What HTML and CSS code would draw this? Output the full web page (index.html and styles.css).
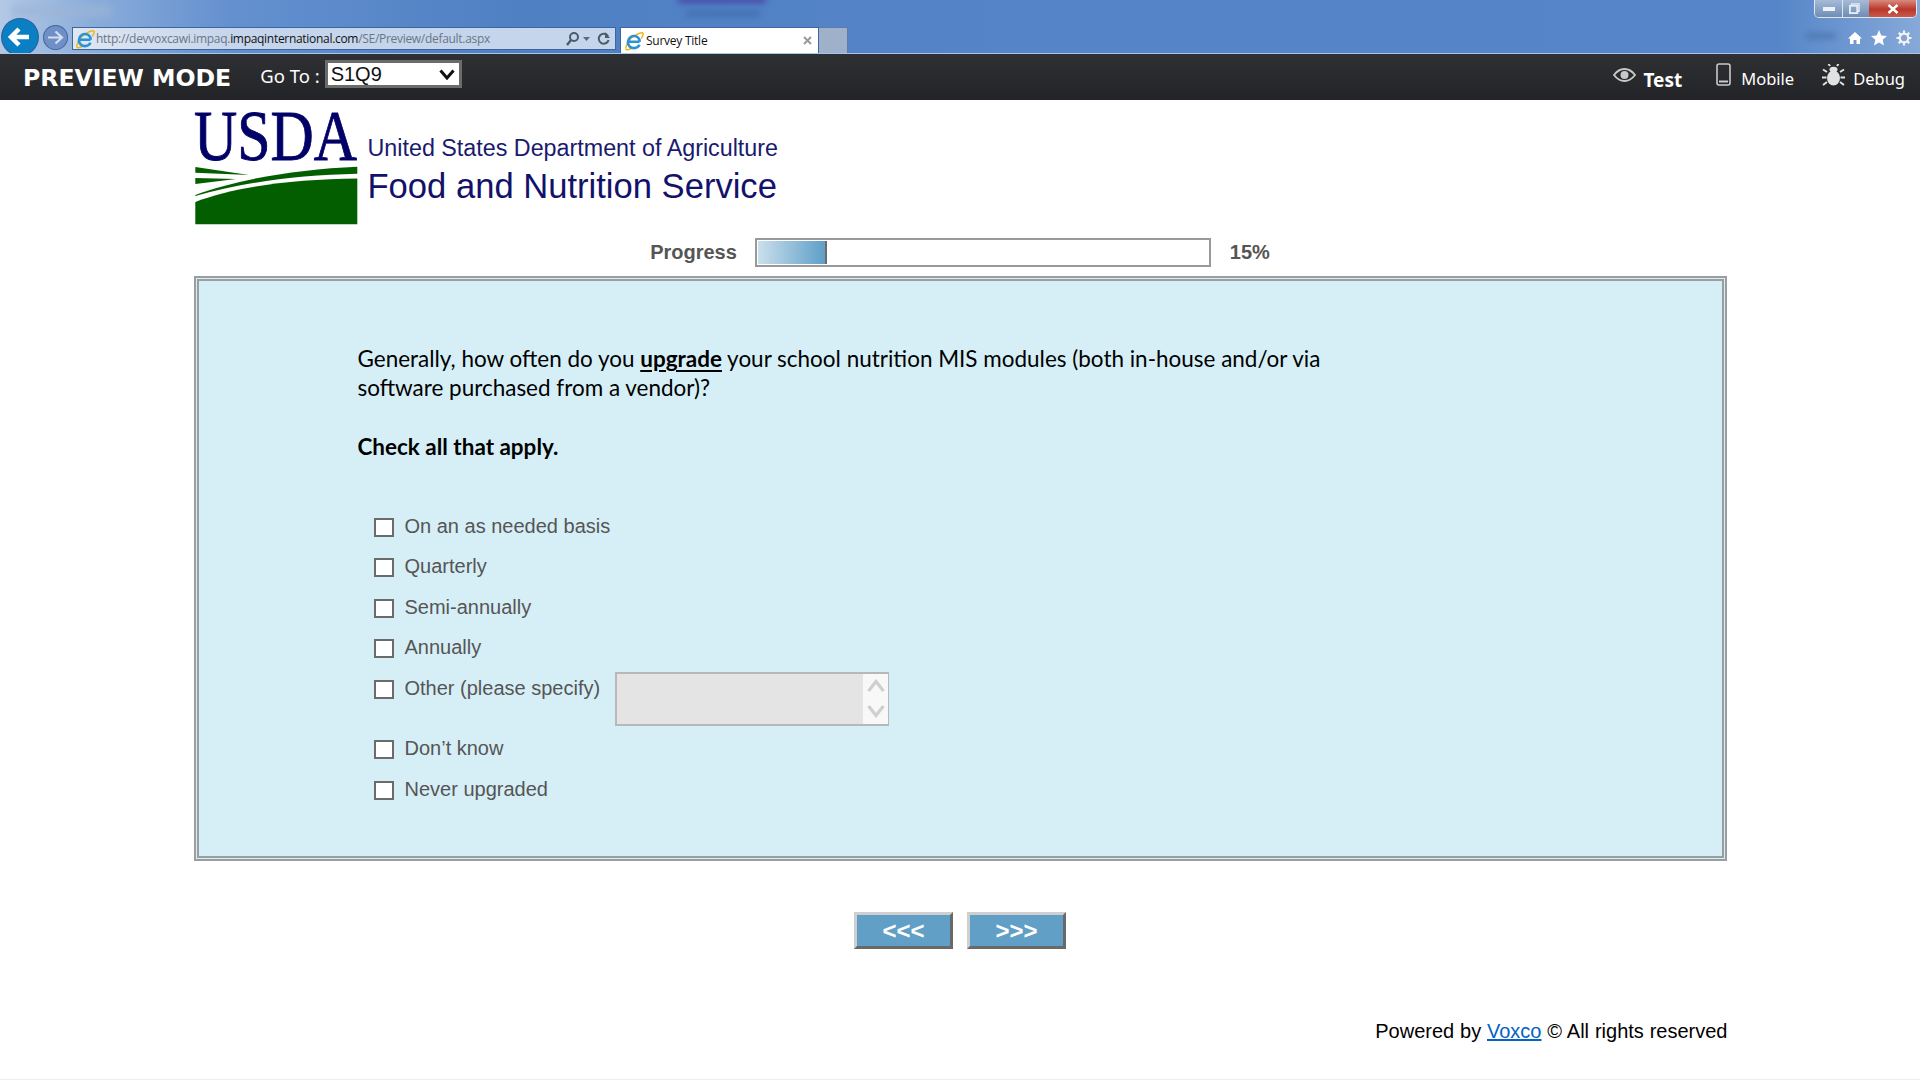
FILE: index.html
```html
<!DOCTYPE html>
<html lang="en">
<head>
<meta charset="utf-8">
<title>Survey Title</title>
<link rel="stylesheet" href="styles.css">
</head>
<body>
<svg class="defs" width="0" height="0" aria-hidden="true">
  <defs>
    <symbol id="ie" viewBox="0 0 20 20">
      <path d="M2.2 17.5C.8 15.6 5 8.2 9.8 5.2 13.6 2.8 18.2 .9 19 2.2c.7 1.1-.6 3.600-1.800 5.400" fill="none" stroke="#f2b51d" stroke-width="1.500"/>
      <path d="M1.500 18c1.500 1.300 4.200.4 6.500-1" fill="none" stroke="#f2b51d" stroke-width="1.500"/>
      <path d="M3.800 10.800h11.700M15.800 10.800C15.800 7.300 13.200 5 10 5 6.600 5 3.900 7.800 3.900 11.200c0 3.500 2.700 5.900 6.100 5.900 2.500 0 4.500-1.200 5.500-3.300" fill="none" stroke="#2a93d5" stroke-width="2.600"/>
    </symbol>
  </defs>
</svg>

<div class="chrome">
  <span class="blur blur-tools"></span>
  <span class="blur blur-purple"></span>
  <span class="blur blur-title"></span>
  <span class="blur blur-right"></span>

  <div class="nav-back">
    <svg viewBox="0 0 36 36" width="36" height="36"><path d="M27 18H10M17 10l-8 8 8 8" fill="none" stroke="#fff" stroke-width="4.500"/></svg>
  </div>
  <div class="nav-forward">
    <svg viewBox="0 0 25 25" width="25" height="25"><path d="M5 12.500h13M12.500 6.500l6.500 6-6.500 6" fill="none" stroke="#d3deef" stroke-width="2.200"/></svg>
  </div>

  <div class="address">
    <svg class="ie-icon" width="20" height="20"><use href="#ie"/></svg>
    <span class="url">http://devvoxcawi.impaq.<b class="url-host">impaqinternational.com</b>/SE/Preview/default.aspx</span>
    <svg class="addr-tools" viewBox="0 0 46 16" width="46" height="16">
      <circle cx="9" cy="6" r="4" fill="none" stroke="#4f5a6b" stroke-width="2"/>
      <path d="M6 9l-4 5" stroke="#4f5a6b" stroke-width="2.400"/>
      <path d="M18 6h7l-3.500 4z" fill="#5d6b80"/>
      <path d="M43 5a5 5 0 1 0 .6 4" fill="none" stroke="#4f5a6b" stroke-width="2"/>
      <path d="M40 1v6h5z" fill="#4f5a6b"/>
    </svg>
  </div>

  <div class="tab">
    <svg class="ie-icon" width="20" height="20"><use href="#ie"/></svg>
    <span class="tab-title">Survey Title</span>
    <svg class="tab-close" viewBox="0 0 9 9" width="9" height="9"><path d="M1 1l7 7M8 1l-7 7" stroke="#9a9a9a" stroke-width="2"/></svg>
  </div>
  <div class="tab-new"></div>

  <div class="browser-tools">
    <svg viewBox="0 0 14 14" width="14" height="14"><path d="M7 1L0 7.500h2V13h3.500V9h3v4H12V7.500h2z" fill="#fff"/></svg>
    <svg viewBox="0 0 16 16" width="16" height="16"><path d="M8 0l2.300 5.400 5.700.5-4.300 3.800 1.300 5.700L8 12.400l-5 3 1.300-5.700L0 5.900l5.700-.5z" fill="#fff"/></svg>
    <svg viewBox="0 0 16 16" width="16" height="16"><circle cx="8" cy="8" r="4.300" fill="none" stroke="#f4f4f4" stroke-width="2.200"/><path d="M8 .5v3M8 12.500v3M.5 8h3M12.500 8h3M2.700 2.700l2.100 2.100M11.200 11.200l2.100 2.100M13.300 2.700l-2.100 2.100M4.800 11.200l-2.100 2.100" stroke="#f4f4f4" stroke-width="2.200"/></svg>
  </div>

  <div class="window-controls">
    <span class="win-btn win-min"><svg viewBox="0 0 12 6" width="12" height="6"><rect x="0" y="1" width="12" height="4" fill="#eef2f8"/></svg></span>
    <span class="win-btn win-max"><svg viewBox="0 0 12 12" width="11" height="11"><path d="M3 3V1h8v8H9" fill="none" stroke="#e7edf5" stroke-width="1.500"/><rect x="1" y="3" width="8" height="8" fill="none" stroke="#e7edf5" stroke-width="2"/></svg></span>
    <span class="win-btn win-close"><svg viewBox="0 0 12 10" width="12" height="10"><path d="M1.500 1l9 8M10.500 1l-9 8" stroke="#fff" stroke-width="2.400"/></svg></span>
  </div>
</div>

<header class="preview-bar">
  <span class="preview-title">PREVIEW MODE</span>
  <span class="goto-label">Go To :</span>
  <div class="goto-select">
    <span>S1Q9</span>
    <svg viewBox="0 0 16 11" width="16" height="11"><path d="M1.500 1.500L8 9l6.500-7.500" fill="none" stroke="#111" stroke-width="3"/></svg>
  </div>
  <nav class="modes">
    <a class="mode mode-test">
      <svg viewBox="0 0 23 14" width="23" height="14"><path d="M1 7c3-4 6.500-6 10.500-6S19 3 22 7c-3 4-6.500 6-10.500 6S4 11 1 7z" fill="none" stroke="#c9c9c9" stroke-width="1.800"/><circle cx="11.500" cy="7" r="4" fill="#c9c9c9"/></svg>
      <span>Test</span>
    </a>
    <a class="mode mode-mobile">
      <svg viewBox="0 0 15 23" width="15" height="23"><rect x="1" y="1" width="13" height="21" rx="2" fill="none" stroke="#c9c9c9" stroke-width="1.600"/><path d="M3 18.500h9" stroke="#c9c9c9" stroke-width="2"/></svg>
      <span>Mobile</span>
    </a>
    <a class="mode mode-debug">
      <svg viewBox="0 0 23 22" width="23" height="22"><ellipse cx="11.500" cy="14" rx="6.500" ry="7.500" fill="#e2e2e2"/><ellipse cx="11.500" cy="5.500" rx="4" ry="2.800" fill="#e2e2e2"/><path d="M8 2L6.500 0M15 2l1.500-2M5 8L1 5.500M18 8l4-2.500M4.500 13.500H0M18.500 13.500H23M5 18l-4 3M18 18l4 3" stroke="#e2e2e2" stroke-width="2"/></svg>
      <span>Debug</span>
    </a>
  </nav>
</header>

<main class="page">
  <div class="logo-row">
    <svg class="logo" viewBox="0 -8 166 126" width="166" height="126" role="img" aria-label="USDA">
      <text x="0" y="52" class="logo-text" textLength="163" lengthAdjust="spacingAndGlyphs">USDA</text>
      <path d="M1.300 94C40 79 100 71 163.300 70.500V116.300H1.300z" fill="#035e00"/>
      <path d="M1.300 87C45 71 105 61 163.300 58.700v7C105 67 50 74 1.300 88z" fill="#035e00"/>
      <path d="M1.300 59L55 67 1.300 64.700z" fill="#035e00"/>
      <path d="M1.300 70L42 71 1.300 76z" fill="#035e00"/>
    </svg>
    <div class="agency">
      <div class="agency-dept">United States Department of Agriculture</div>
      <div class="agency-fns">Food and Nutrition Service</div>
    </div>
  </div>

  <div class="progress-row">
    <span class="progress-label">Progress</span>
    <div class="progress-track"><div class="progress-fill"></div></div>
    <span class="progress-pct">15%</span>
  </div>

  <section class="panel">
    <p class="question">Generally, how often do you <b class="key">upgrade</b> your school nutrition MIS modules (both in-house and/or via software purchased from a vendor)?</p>
    <p class="instruction">Check all that apply.</p>
    <div class="options">
      <label class="opt"><input type="checkbox"><span>On an as needed basis</span></label>
      <label class="opt"><input type="checkbox"><span>Quarterly</span></label>
      <label class="opt"><input type="checkbox"><span>Semi-annually</span></label>
      <label class="opt"><input type="checkbox"><span>Annually</span></label>
      <div class="opt opt-other">
        <input type="checkbox"><span>Other (please specify)</span>
        <div class="specify">
          <textarea class="specify-input" disabled aria-label="Other"></textarea>
          <div class="specify-scroll">
            <svg viewBox="0 0 18 14" width="18" height="14"><path d="M1.500 12L9 2.500 16.500 12" fill="none" stroke="#cfcfcf" stroke-width="3.200"/></svg>
            <svg viewBox="0 0 18 14" width="18" height="14"><path d="M1.500 2L9 11.500 16.500 2" fill="none" stroke="#cfcfcf" stroke-width="3.200"/></svg>
          </div>
        </div>
      </div>
      <label class="opt opt-after-other"><input type="checkbox"><span>Don’t know</span></label>
      <label class="opt"><input type="checkbox"><span>Never upgraded</span></label>
    </div>
  </section>

  <div class="nav-buttons">
    <button class="nav-btn" type="button">&lt;&lt;&lt;</button>
    <button class="nav-btn" type="button">&gt;&gt;&gt;</button>
  </div>

  <footer class="footer">Powered by <a class="footer-link">Voxco</a> © All rights reserved</footer>
</main>
<div class="page-end"></div>
</body>
</html>
```

FILE: styles.css
```css
* { box-sizing: border-box; }
html, body { margin: 0; padding: 0; height: 1080px; overflow: hidden; background: #fff; }
body { display: flex; flex-direction: column; font-family: "Liberation Sans", Arial, sans-serif; }
.defs { position: absolute; }

/* browser chrome */
.chrome {
  position: relative;
  flex: none;
  height: 54px;
  display: flex;
  align-items: flex-start;
  padding-top: 19px;
  overflow: hidden;
  border-bottom: 1px solid #a9c6ea;
  background: linear-gradient(90deg, #b3c9e6 0, #8badda 90px, #6490cf 230px, #4f80c3 520px, #5585c8 1000px, #5686c9 1780px, #86a9d8 1920px);
}
.blur { position: absolute; filter: blur(3px); }
.blur-tools { left: 12px; top: 5px; width: 100px; height: 12px; background: #9db4d6; opacity: .6; }
.blur-purple { left: 678px; top: -4px; width: 88px; height: 7px; background: #4a47a8; }
.blur-title { left: 686px; top: 11px; width: 74px; height: 5px; background: #3f6cae; }
.blur-right { left: 1806px; top: 33px; width: 30px; height: 6px; background: #41699f; opacity: .6; }

.nav-back {
  position: relative;
  flex: none;
  width: 36px; height: 36px;
  margin-left: 2px;
  border-radius: 50%;
  background: #0a7fc4;
  box-shadow: 0 0 0 1px #2a5f98;
}
.nav-back svg, .nav-forward svg { display: block; }
.nav-forward {
  position: relative;
  flex: none;
  width: 25px; height: 25px;
  margin: 6px 0 0 5px;
  border-radius: 50%;
  background: #6f90c6;
  box-shadow: inset 0 0 0 1px #44689f;
}
.address {
  position: relative;
  flex: none;
  width: 544px; height: 23px;
  margin: 8px 0 0 4px;
  display: flex;
  align-items: center;
  padding: 0 4px 0 2px;
  border: 1px solid #3f669c;
  background: linear-gradient(90deg, #dfe7f3, #c5d5ec 30%, #c5d5ec);
}
.ie-icon { flex: none; }
.url {
  margin-left: 1px;
  font: 12px "Open Sans", sans-serif;
  letter-spacing: -.3px;
  color: #6b7685;
  white-space: nowrap;
}
.url-host { font-weight: 400; color: #111; }
.addr-tools { margin-left: auto; flex: none; }
.tab {
  position: relative;
  flex: none;
  width: 199px; height: 26px;
  margin: 8px 0 0 4px;
  display: flex;
  align-items: center;
  padding: 0 6px 0 3px;
  background: #fff;
  border: 1px solid #3f669c;
  border-bottom: none;
}
.tab-title { margin-left: 2px; font: 12px "Open Sans", sans-serif; letter-spacing: -.25px; color: #111; }
.tab-close { margin-left: auto; }
.tab-new {
  position: relative;
  flex: none;
  width: 29px; height: 26px;
  margin-top: 8px;
  background: #9fb0cb;
  border: 1px solid #5d7cab;
  border-width: 1px 1px 0 0;
}
.browser-tools {
  position: relative;
  margin: 11px 8px 0 auto;
  display: flex;
  align-items: center;
  gap: 9px;
}
.window-controls {
  position: absolute;
  right: 3px; top: 0;
  width: 103px; height: 18px;
  display: flex;
  border: 1px solid #dfe6f0;
  border-top: none;
  border-radius: 0 0 5px 5px;
  overflow: hidden;
}
.win-btn { display: flex; align-items: center; justify-content: center; height: 100%; }
.win-min { width: 28px; background: linear-gradient(#a5bbd8, #6f8cb4); border-right: 1px solid #dfe6f0; }
.win-max { width: 26px; padding-right: 3px; background: linear-gradient(#a5bbd8, #6f8cb4); }
.win-close { flex: 1; background: linear-gradient(#d98a80, #b9382a 55%, #c95a4e); }

/* preview bar */
.preview-bar {
  flex: none;
  height: 46px;
  display: flex;
  align-items: center;
  padding: 0 15px 0 23px;
  color: #fff;
  background: linear-gradient(#2f3033, #232427);
}
.preview-title { font: 700 23.600px/1 "DejaVu Sans", sans-serif; margin-top: 3px; }
.goto-label { margin: -2px 0 0 29px; font: 18.500px/1 "Noto Sans", sans-serif; }
.goto-select {
  width: 137px; height: 28px;
  margin-left: 5px;
  display: flex;
  align-items: center;
  justify-content: space-between;
  padding: 0 4px 0 3px;
  border: 3px solid #6b6b6b;
  background: #fff;
  color: #111;
  font-size: 20px;
  margin-top: -6px;
}
.modes { margin-left: auto; display: flex; align-items: center; }
.mode { display: flex; align-items: center; font: 16.500px/1 "Noto Sans", sans-serif; }
.mode-test { font-weight: 700; font-size: 19px; gap: 7px; }
.mode-test svg { margin-top: -4px; }
.mode-test span { margin-top: 6px; }
.mode-mobile { gap: 10px; margin-left: 34px; }
.mode-mobile svg { margin-top: -5px; }
.mode-mobile span { margin-top: 5px; }
.mode-debug { gap: 8px; margin-left: 28px; }
.mode-debug svg { margin-top: -5px; }
.mode-debug span { margin-top: 5px; }

/* page */
.page { width: 1533px; margin: 0 auto; flex: none; }
.logo-row { height: 138px; display: flex; }
.logo { flex: none; display: block; overflow: visible; }
.logo-text { font: 72px "Liberation Serif", serif; fill: #000066; stroke: #000066; stroke-width: .9px; }
.agency { margin: 33px 0 0 8px; color: #1a1a6e; white-space: nowrap; }
.agency-dept { font-size: 23.300px; line-height: 30px; }
.agency-fns { font-size: 34.600px; line-height: 40px; margin-top: 3px; color: #12126a; }

.progress-row {
  height: 29px;
  display: flex;
  justify-content: center;
  align-items: center;
  font-size: 20px;
  font-weight: 700;
  color: #555;
}
.progress-track {
  width: 456px; height: 29px;
  margin: 0 19px 0 18px;
  padding: 1px;
  border: 2px solid #999;
  background: #fff;
}
.progress-fill {
  width: 69px; height: 100%;
  border-right: 2px solid #6b6b6b;
  background: linear-gradient(90deg, #cadfec, #5f9fc8);
}

.panel {
  margin-top: 9px;
  height: 585px;
  padding: 63px 0 0 159px;
  border: 5px double #9a9ea0;
  background: #d6eff7;
}
.question {
  margin: 0;
  width: 980px;
  font: 22.470px/29px Lato, sans-serif;
  color: #000;
}
.key { font-weight: 700; text-decoration: underline; text-decoration-thickness: 2px; text-underline-offset: 3px; }
.instruction { margin: 30px 0 0; font: 700 22.470px/29px Lato, sans-serif; color: #000; }
.options { margin: 46px 0 0 16px; font-size: 20px; color: #555; }
.opt { display: flex; align-items: flex-start; height: 40.300px; line-height: 24px; }
.opt span { margin: 7px 0 0 11px; white-space: nowrap; }
.opt input {
  appearance: none;
  flex: none;
  width: 20px; height: 19px;
  margin: 11px 0 0;
  border: 2px solid #6b6b6b;
  background: #fff;
}
.opt-other { height: 60px; margin-top: 1px; }
.opt-after-other { height: 41px; }
.specify {
  width: 274px; height: 54px;
  margin: 3px 0 0 15px;
  display: flex;
  border: 2px solid #b8b8b8;
  border-right-width: 1px;
  background: #e4e4e4;
}
.specify-input { flex: 1; min-width: 0; border: 0; padding: 0; resize: none; background: #e4e4e4; }
.specify-scroll {
  flex: none;
  width: 25px;
  display: flex;
  flex-direction: column;
  align-items: center;
  justify-content: space-between;
  padding: 5px 0 6px;
  background: #f8f8f8;
}
.specify-scroll svg { display: block; }

.nav-buttons { margin-top: 51px; display: flex; justify-content: center; gap: 14px; }
.nav-btn {
  width: 99px; height: 37px;
  padding: 0;
  border: 3px solid;
  border-color: #cfcfcf #696969 #696969 #cfcfcf;
  background: #629fc6;
  color: #fff;
  font: 700 24px/1 "Liberation Sans", sans-serif;
}

.footer { margin: 70px -1px 0 0; text-align: right; font-size: 20px; line-height: 24px; word-spacing: .3px; color: #000; }
.footer-link { color: #0563c1; text-decoration: underline; text-decoration-thickness: 2px; }
.page-end { margin-top: auto; height: 1px; background: #eee; flex: none; }
```
